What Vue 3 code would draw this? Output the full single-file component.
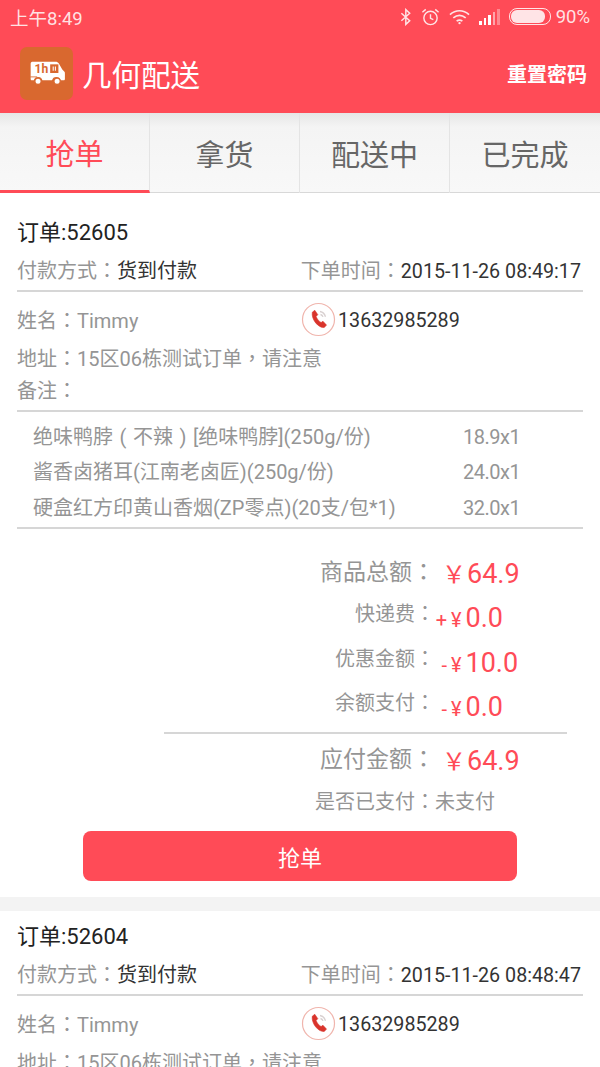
<template>
  <div class="page">
    <header class="topbar">
      <div class="status">
        <span class="time">上午8:49</span>
        <div class="status-icons">
          <svg class="ic" width="12" height="18" viewBox="0 0 13 18" fill="none" stroke="#fff" stroke-width="1.6" opacity="0.85"><path d="M1.5 5l9 8-4.2 4V1l4.2 4-9 8" /></svg>
          <svg class="ic" width="19" height="20" viewBox="0 0 20 20" fill="none" stroke="#fff" stroke-width="1.5" opacity="0.85"><circle cx="10" cy="11" r="7" /><path d="M10 7v4.4l3 1.4M1.5 5L5 2M18.5 5L15 2" /></svg>
          <svg class="ic" width="21" height="16" viewBox="0 0 22 16" fill="none" stroke="#fff" stroke-width="1.8" opacity="0.85"><path d="M1 5.5c6-5.4 14-5.4 20 0M4.500 9c4-3.400 9-3.400 13 0M8 12.300c2-1.500 4-1.500 6 0" /><circle cx="11" cy="14.500" r="1.200" fill="#fff" stroke="none" /></svg>
          <div class="signal">
            <i v-for="(b, idx) in signalBars" :key="idx" :style="{ height: b.h + 'px', opacity: b.o }"></i>
          </div>
          <div class="battery"><i></i></div>
        </div>
        <span class="pct">90%</span>
      </div>
      <div class="appbar">
        <div class="logo">
          <svg width="36" height="26" viewBox="0 0 41 30">
            <path d="M3 2h26c2 0 3 .5 4 2l4 7 2.500 2.500c.6.7.5 1.500.5 2.500v6c0 1-.5 1.500-1.500 1.500h-3.500a5 5 0 0 0-9.800 0H14a5 5 0 0 0-9.800 0H2c-1 0-1.500-.5-1.500-1.500V4C.5 2.800 1.500 2 3 2z" fill="#fff" />
            <rect x="23" y="5" width="9.500" height="10" fill="#d9682f" />
            <path d="M26.500 7.500v5M29 7.500v5" stroke="#fff" stroke-width="1.200" />
            <circle cx="9" cy="24.500" r="3.600" fill="#fff" stroke="#d9682f" stroke-width="1.400" />
            <circle cx="31" cy="24.500" r="3.600" fill="#fff" stroke="#d9682f" stroke-width="1.400" />
            <path d="M0 19.500h8" stroke="#d9682f" stroke-width="1" />
            <text x="5" y="15" font-size="14" font-weight="700" fill="#d9682f" font-family="Roboto, sans-serif">1h</text>
          </svg>
        </div>
        <h1 class="title">几何配送</h1>
        <button class="reset">重置密码</button>
      </div>
    </header>

    <nav class="tabs">
      <div v-for="(t, i) in tabs" :key="t" class="tab" :class="{ active: i === 0 }">{{ t }}</div>
    </nav>

    <section v-for="o in orders" :key="o.id" class="card">
      <div class="order-no">订单:{{ o.id }}</div>
      <div class="meta">
        <span><em>付款方式<b class="punc">：</b></em>货到付款</span>
        <span><em>下单时间<b class="punc">：</b></em><span class="stamp">{{ o.time }}</span></span>
      </div>

      <div class="contact">
        <div class="two-col">
          <span class="gray">姓名<b class="punc">：</b>Timmy</span>
          <span class="phone">
            <svg width="35" height="35" viewBox="0 0 35 35" fill="none">
              <circle cx="17.500" cy="17.500" r="16" stroke="#f0b5ad" stroke-width="1.200" />
              <path d="M11.300 10.200l2.500-1.900 3 4.400-1.700 1.700c.8 2.400 2.800 4.900 5 6.200l1.800-1.400 3.600 3.900-2.200 2.300c-5.800 1-13.200-8-12-15.200z" fill="#d9342c" stroke="#d9342c" stroke-width="0.600" />
              <path d="M19 9.500c2.700.5 4.700 2.500 5.500 5.200M19.500 12.500c1.200.3 2.100 1.200 2.500 2.400" stroke="#d8d0d0" stroke-width="1.300" />
            </svg>
            <span class="phone-no">{{ o.phone }}</span>
          </span>
        </div>
        <div class="gray addr">地址<b class="punc">：</b>15区06栋测试订单<b class="punc">，</b>请注意</div>
        <div class="gray note">备注<b class="punc">：</b></div>
      </div>

      <div class="goods">
        <div v-for="g in goods" :key="g.price" class="good">
          <span><template v-for="(s, i) in g.name" :key="i"><b v-if="i % 2" class="paren">{{ s }}</b><template v-else>{{ s }}</template></template></span>
          <span class="price">{{ g.price }}</span>
        </div>
      </div>

      <div class="totals">
        <div v-for="r in summary" :key="r.label" class="sum-row" :class="{ big: r.big }">
          <span class="sum-label">{{ r.label }}<b class="punc">：</b></span>
          <span class="sum-value">
            <span class="sign">{{ r.sign }}</span><span class="yen">{{ r.big ? '￥' : '¥' }}</span><span class="amount">{{ r.amount }}</span>
          </span>
        </div>
        <div class="sum-line"></div>
        <div class="sum-row big">
          <span class="sum-label">应付金额<b class="punc">：</b></span>
          <span class="sum-value"><span class="yen">￥</span><span class="amount">64.9</span></span>
        </div>
        <div class="paid">是否已支付<b class="punc">：</b>未支付</div>
      </div>

      <button class="grab">抢单</button>
    </section>
  </div>
</template>

<script setup>
const tabs = ['抢单', '拿货', '配送中', '已完成']

const signalBars = [
  { h: 4, o: 1 },
  { h: 7, o: 1 },
  { h: 10, o: 1 },
  { h: 13, o: 0.5 },
  { h: 16, o: 0.35 }
]

const orders = [
  { id: 52605, time: '2015-11-26 08:49:17', phone: '13632985289' },
  { id: 52604, time: '2015-11-26 08:48:47', phone: '13632985289' }
]

// odd entries are the brackets, they sit centred in a full-width cell
const goods = [
  { name: ['绝味鸭脖', '(', '不辣', ')', '[绝味鸭脖](250g/份)'], price: '18.9x1' },
  { name: ['酱香卤猪耳(江南老卤匠)(250g/份)'], price: '24.0x1' },
  { name: ['硬盒红方印黄山香烟(ZP零点)(20支/包*1)'], price: '32.0x1' }
]

const summary = [
  { label: '商品总额', sign: '', amount: '64.9', big: true },
  { label: '快递费', sign: '+', amount: '0.0' },
  { label: '优惠金额', sign: '-', amount: '10.0' },
  { label: '余额支付', sign: '-', amount: '0.0' }
]
</script>

<style>
html,
body {
  margin: 0;
  background: #fff;
}
</style>

<style scoped>
.page {
  width: 600px;
  height: 1067px;
  overflow: hidden;
  background: #f3f3f3;
  font-family: Roboto, "Noto Sans CJK SC", sans-serif;
}

.topbar {
  height: 113px;
  background: #ff4b57;
  color: #fff;
  display: flex;
  flex-direction: column;
}

.status {
  height: 33px;
  display: flex;
  align-items: center;
  padding: 0 10px;
  font-size: 18.500px;
  color: rgba(255, 255, 255, 0.85);
}

.time {
  flex: 1;
}

.status-icons {
  display: flex;
  align-items: center;
  gap: 9px;
}

.signal {
  display: flex;
  align-items: flex-end;
  gap: 2px;
  height: 16px;
}

.signal i {
  width: 2.500px;
  background: #fff;
}

.battery {
  width: 38px;
  height: 13px;
  border: 1px solid rgba(255, 255, 255, 0.85);
  border-radius: 8px;
  padding: 1px;
  display: flex;
}

.battery i {
  width: 90%;
  border-radius: 6px;
  background: rgba(255, 255, 255, 0.85);
}

.pct {
  margin-left: 5px;
}

.appbar {
  flex: 1;
  display: flex;
  align-items: center;
  padding: 0 13px 0 20px;
}

.logo {
  width: 53px;
  height: 53px;
  box-sizing: border-box;
  padding-left: 3px;
  border-radius: 7px;
  background: #d9682f;
  display: flex;
  align-items: center;
  justify-content: center;
}

.title {
  flex: 1;
  margin: 0 0 0 9px;
  font-size: 29.500px;
  font-weight: 400;
}

.reset {
  border: 0;
  padding: 0;
  background: none;
  color: #fff;
  font: 700 20px Roboto, "Noto Sans CJK SC", sans-serif;
}

.tabs {
  height: 80px;
  box-sizing: border-box;
  display: grid;
  grid-template-columns: repeat(4, 1fr);
  background: linear-gradient(#e6e6e6, #f4f4f4 14px, #f8f8f8);
  border-bottom: 1px solid #d8d8d8;
}

.tab {
  display: flex;
  align-items: center;
  justify-content: center;
  font-size: 29px;
  color: #666;
  border-right: 1px solid #e4e4e4;
  box-sizing: border-box;
  margin-bottom: -1px;
}

.tab:last-child {
  border-right: 0;
}

.tab.active {
  color: #ff4b57;
  border-bottom: 3px solid #ff4b57;
}

.card {
  background: #fff;
  padding: 6px 17px 16px;
  margin-bottom: 14px;
}

.card:first-of-type {
  padding-top: 20px;
}

.order-no {
  padding-top: 2px;
  font-size: 22px;
  line-height: 36px;
  color: #222;
}

.punc {
  font-family: "Noto Sans CJK TC", sans-serif;
  font-weight: 400;
}

.paren {
  display: inline-block;
  width: 20px;
  text-align: center;
  font-weight: 400;
}

.meta {
  display: flex;
  justify-content: space-between;
  height: 37px;
  font-size: 20px;
  line-height: 37px;
  color: #333;
  border-bottom: 2px solid #d6d6d6;
  padding: 0 2px 2px 0;
}

.meta em {
  font-style: normal;
  color: #959595;
}

.stamp {
  font-size: 19.700px;
}

.contact {
  padding: 8px 0 8px;
  font-size: 20px;
  border-bottom: 2px solid #d6d6d6;
}

.two-col {
  display: grid;
  grid-template-columns: 284px 1fr;
  align-items: center;
  height: 39px;
}

.gray {
  color: #959595;
}

.phone {
  display: flex;
  align-items: center;
  gap: 2px;
  color: #333;
}

.phone-no {
  font-size: 19.700px;
  margin-top: 1px;
}

.addr {
  height: 38px;
  line-height: 38px;
}

.note {
  height: 25px;
  line-height: 25px;
}

.goods {
  padding: 7.500px 0 1px 16px;
  font-size: 20px;
  color: #959595;
  border-bottom: 2px solid #d6d6d6;
}

.good {
  display: grid;
  grid-template-columns: 430px 1fr;
  height: 35.500px;
  line-height: 35.500px;
}

.price {
  letter-spacing: -0.5px;
}

.totals {
  padding-top: 21px;
}

.sum-row {
  display: grid;
  grid-template-columns: 418px 1fr;
  height: 44.500px;
  align-items: center;
  color: #959595;
  font-size: 20px;
}

.sum-label {
  text-align: right;
  margin-top: -8px;
}

.sum-row.big .sum-label {
  font-size: 23px;
  margin-top: -4px;
}

.sum-value {
  color: #ff4b57;
  display: flex;
  align-items: baseline;
  line-height: 1;
  margin-top: 4px;
}

.sign {
  width: 12px;
  text-align: right;
  font-size: 20px;
}

.yen {
  font-size: 20px;
  margin-left: 4px;
}

.amount {
  font-size: 27px;
  margin-left: 4px;
}

.sum-row.big .sign {
  display: none;
}

.sum-row.big .yen {
  font-size: 24px;
  margin-left: 7px;
}

.sum-row.big .amount {
  margin-left: 1px;
}

.sum-line {
  height: 2px;
  background: #d6d6d6;
  margin: 4px 16px 3px 147px;
}

.paid {
  height: 34px;
  font-size: 20px;
  line-height: 34px;
  margin-top: 2px;
  color: #959595;
  text-align: right;
  padding-right: 88px;
}

.grab {
  display: block;
  width: 434px;
  height: 50px;
  margin: 13.500px auto 0;
  border: 0;
  border-radius: 8px;
  background: #ff4b57;
  color: #fff;
  font: 400 22px Roboto, "Noto Sans CJK SC", sans-serif;
}
</style>
